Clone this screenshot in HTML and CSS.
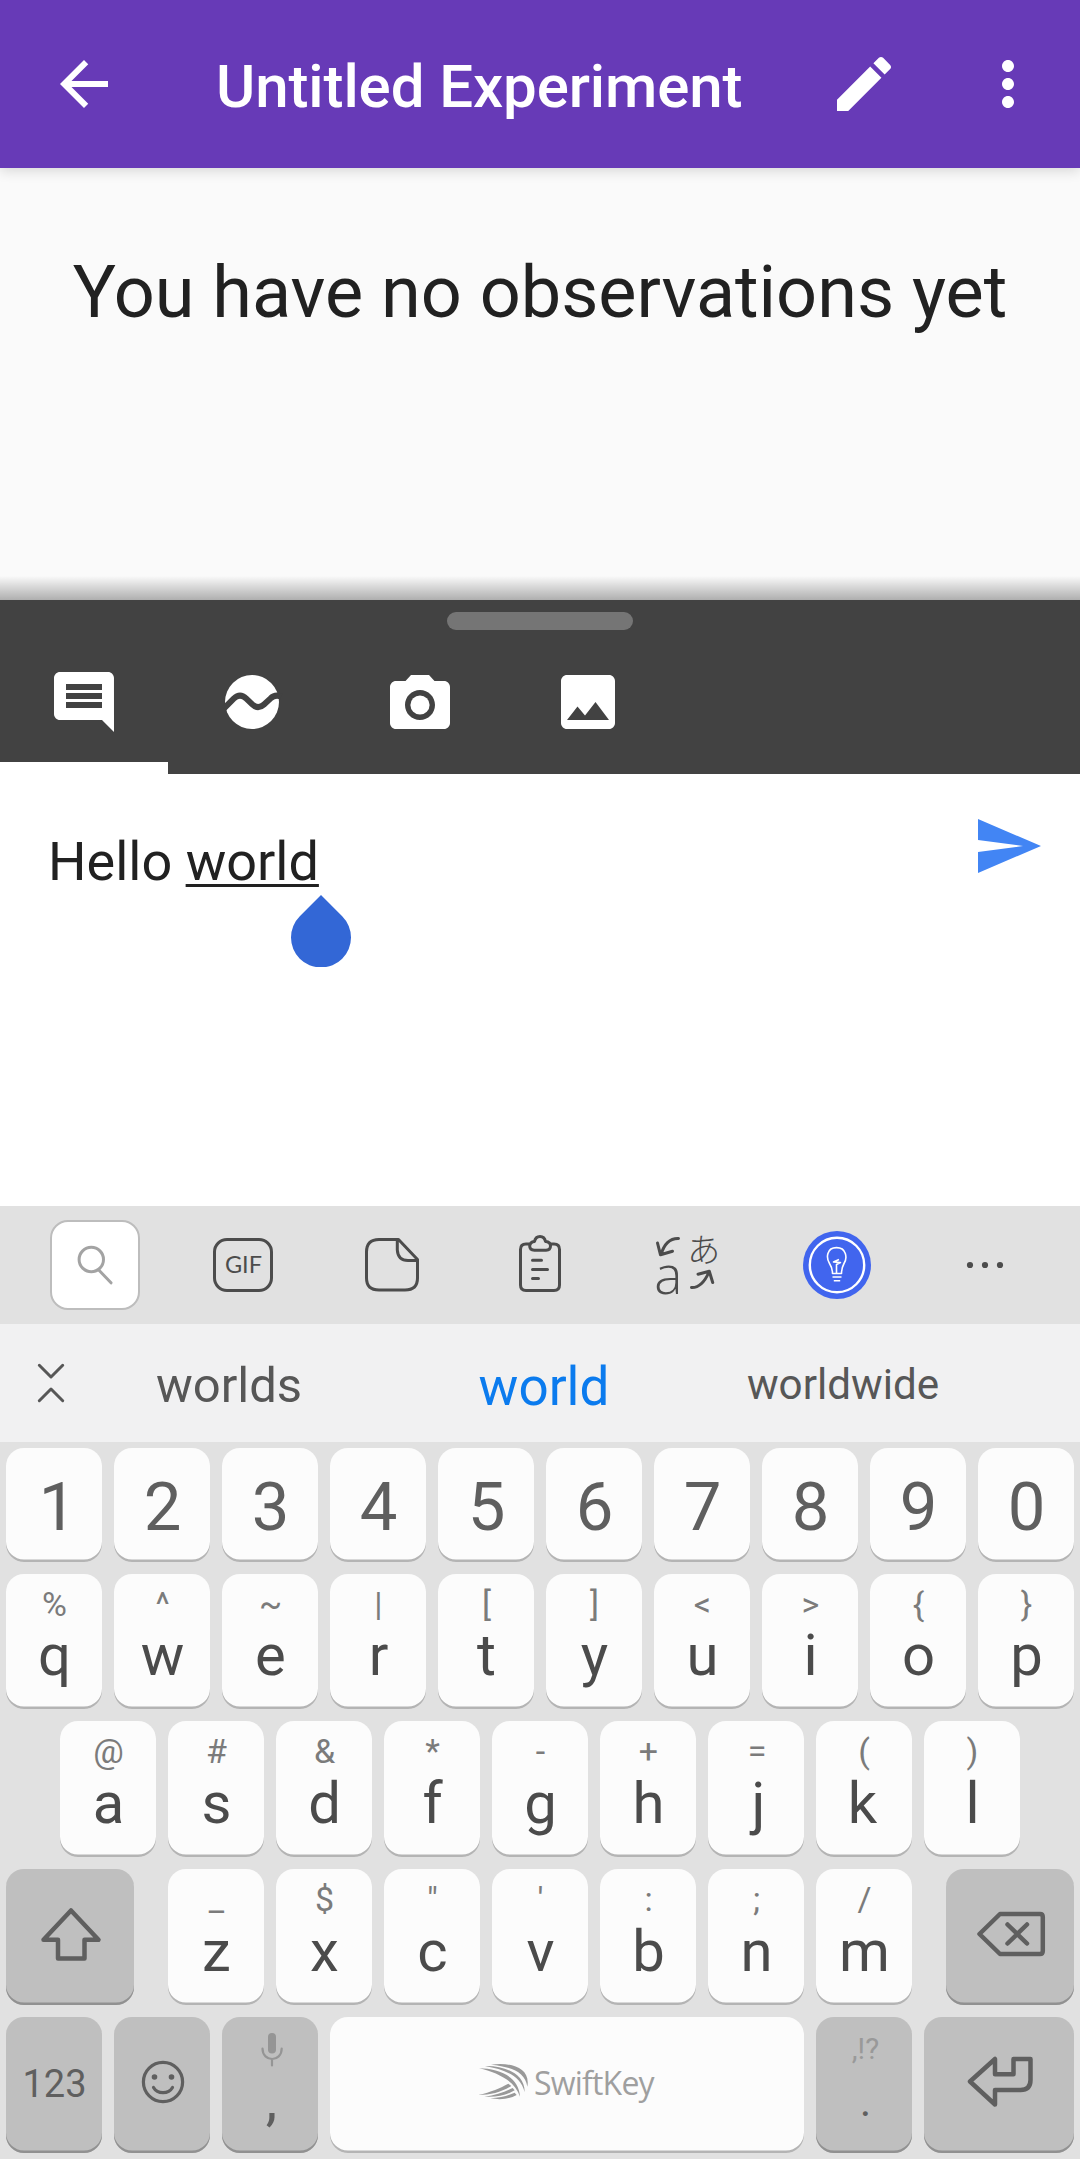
FILE: index.html
```html
<!DOCTYPE html>
<html lang="en">
<head>
<meta charset="utf-8">
<title>Untitled Experiment</title>
<link rel="stylesheet" href="styles.css">
</head>
<body>
<header class="appbar">
  <svg class="icon" viewBox="0 0 24 24"><path d="M20 11H7.83l5.59-5.59L12 4l-8 8 8 8 1.41-1.41L7.83 13H20v-2z"/></svg>
  <h1 class="appbar-title">Untitled Experiment</h1>
  <svg class="icon" viewBox="0 0 24 24"><path d="M3 17.25V21h3.75L17.81 9.94l-3.75-3.75L3 17.25zM20.71 7.04c.39-.39.39-1.02 0-1.41l-2.34-2.34c-.39-.39-1.02-.39-1.41 0l-1.83 1.83 3.75 3.75 1.83-1.83z"/></svg>
  <svg class="icon" viewBox="0 0 24 24"><path d="M12 8c1.1 0 2-.9 2-2s-.9-2-2-2-2 .9-2 2 .9 2 2 2zm0 2c-1.1 0-2 .9-2 2s.9 2 2 2 2-.9 2-2-.9-2-2-2zm0 6c-1.1 0-2 .9-2 2s.9 2 2 2 2-.9 2-2-.9-2-2-2z"/></svg>
</header>

<main class="observations">
  <p class="empty">You have no observations yet</p>
</main>

<section class="sheet">
  <div class="grip"></div>
  <nav class="tabs">
    <div class="tab active"><svg class="icon" viewBox="0 0 24 24"><path d="M21.99 4c0-1.1-.89-2-1.99-2H4c-1.1 0-2 .9-2 2v12c0 1.1.9 2 2 2h14l4 4-.01-18zM18 14H6v-2h12v2zm0-3H6V9h12v2zm0-3H6V6h12v2z"/></svg></div>
    <div class="tab"><svg class="icon" viewBox="0 0 24 24"><circle cx="12" cy="12" r="9"/><path class="wave" d="M2.6 14.2L5.9 10.9Q8 8.9 10.1 10.9L12.1 12.8Q14 14.6 16 12.8L18.2 10.8Q19.7 9.3 21.8 10.2"/></svg></div>
    <div class="tab"><svg class="icon" viewBox="0 -1 24 24"><path fill-rule="evenodd" d="M9 2L7.17 4H4c-1.1 0-2 .9-2 2v12c0 1.1.9 2 2 2h16c1.1 0 2-.9 2-2V6c0-1.1-.9-2-2-2h-3.17L15 2H9zm3 15c-2.76 0-5-2.24-5-5s2.24-5 5-5 5 2.24 5 5-2.24 5-5 5z"/><circle cx="12" cy="12" r="3.2"/></svg></div>
    <div class="tab"><svg class="icon" viewBox="0 0 24 24"><path d="M21 19V5c0-1.1-.9-2-2-2H5c-1.1 0-2 .9-2 2v14c0 1.1.9 2 2 2h14c1.1 0 2-.9 2-2zM8.5 13.5l2.5 3.01L14.5 12l4.5 6H5l3.5-4.5z"/></svg></div>
  </nav>
</section>

<section class="note">
  <p class="note-text">Hello <span class="composing">world<svg class="caret-handle" viewBox="0 0 60 72"><path d="M30 0L51.2 21.2A30 30 0 1 1 8.8 21.2Z"/></svg></span></p>
  <svg class="icon send" viewBox="0 0 24 24"><path d="M2 21L23 12 2 3v7l15 2-15 2z"/></svg>
</section>

<section class="toolbar">
  <div class="tool"><div class="search"><svg width="86" height="86" viewBox="52 1222 86 86" class="line pale"><circle cx="91.3" cy="1259.5" r="12.2"/><path d="M99 1270.3L111 1282.8"/></svg></div></div>
  <div class="tool"><div class="gif">GIF</div></div>
  <div class="tool"><svg width="60" height="60" viewBox="362 1235 60 60" class="line"><path d="M398.5 1239.5H379Q366.500 1239.500 366.500 1252V1278Q366.500 1290 379 1290H405Q417.500 1290 417.500 1278V1259.500ZM397.300 1240V1250Q398 1260.500 408 1260.500H417"/></svg></div>
  <div class="tool"><svg width="60" height="68" viewBox="510 1231 60 68" class="line"><path d="M529 1244H526Q520.500 1244 520.500 1249.500V1285Q520.500 1290.500 526 1290.500H554Q559.500 1290.500 559.500 1285V1249.500Q559.500 1244 554 1244H551M534.500 1250.300Q529.700 1250 529.700 1246Q530 1242 534.500 1241.500Q535.500 1236.500 540 1236.500T545.500 1241.500Q550.500 1242 550.500 1246Q550.500 1250 546 1250.300ZM532.500 1260.300H541.500M532.500 1269.400H547.500M532.500 1278.500H538.500"/></svg></div>
  <div class="tool translate">
    <svg width="26" height="22" viewBox="656 1236 26 22" class="line"><path d="M679.500 1239.500Q667 1239 662 1255.500M658.500 1244L661.500 1255.800 673.500 1252.200"/></svg>
    <span class="kana" lang="ja">あ</span>
    <span class="latin">a</span>
    <svg width="26" height="22" viewBox="690 1271 26 22" class="line"><path d="M692.500 1290.500Q703 1291 710 1275M699 1277.200L710.300 1274.200 713.700 1285.500"/></svg>
  </div>
  <div class="tool"><svg width="68" height="68" viewBox="803 1231 68 68" class="bulb"><circle class="disc" cx="837" cy="1265" r="34"/><circle class="ring" cx="837" cy="1265" r="27.200"/><path d="M832.500 1273.500Q832.500 1268 829.500 1263.500C826 1258 826.500 1247.600 836.500 1247.600S847.500 1258 844 1263.500Q841.500 1268 841.500 1273.500ZM836.500 1273V1264.500L840.500 1262.500 833.500 1262 839 1259.500M832.500 1277H841.500M833.800 1280.700H840.200"/></svg></div>
  <div class="tool"><svg width="40" height="10" viewBox="0 0 40 10" class="dots"><circle cx="5" cy="5" r="3.100"/><circle cx="20" cy="5" r="3.100"/><circle cx="35" cy="5" r="3.100"/></svg></div>
</section>

<section class="suggestions">
  <svg width="30" height="42" viewBox="36 1362 30 42" class="line collapse"><path d="M39.300 1365.300L51 1377 62.700 1365.300M39.300 1400.700L51 1389 62.700 1400.700"/></svg>
  <span class="word first">worlds</span>
  <span class="word best">world</span>
  <span class="word last">worldwide</span>
</section>

<section class="keyboard">
  <div class="row digits">
    <div class="key one">1</div><div class="key">2</div><div class="key">3</div><div class="key">4</div><div class="key">5</div><div class="key">6</div><div class="key">7</div><div class="key">8</div><div class="key">9</div><div class="key">0</div>
  </div>
  <div class="row top">
    <div class="key"><small>%</small>q</div><div class="key"><small>^</small>w</div><div class="key"><small>~</small>e</div><div class="key"><small>|</small>r</div><div class="key"><small>[</small>t</div><div class="key"><small>]</small>y</div><div class="key"><small>&lt;</small>u</div><div class="key"><small>&gt;</small>i</div><div class="key"><small>{</small>o</div><div class="key"><small>}</small>p</div>
  </div>
  <div class="row home">
    <div class="key"><small>@</small>a</div><div class="key"><small>#</small>s</div><div class="key"><small>&amp;</small>d</div><div class="key"><small>*</small>f</div><div class="key"><small>-</small>g</div><div class="key"><small>+</small>h</div><div class="key jay"><small>=</small>j</div><div class="key kay"><small>(</small>k</div><div class="key"><small>)</small>l</div>
  </div>
  <div class="row bottom">
    <div class="key dark shift"><svg width="128" height="134" viewBox="6 1869 128 134" class="glyph"><path d="M71 1910.500L98.500 1939.800H84.500V1958.500H58V1939.800H43.500Z"/></svg></div>
    <div class="key"><small>_</small>z</div><div class="key"><small>$</small>x</div><div class="key"><small>"</small>c</div><div class="key"><small>'</small>v</div><div class="key"><small>:</small>b</div><div class="key"><small>;</small>n</div><div class="key"><small>/</small>m</div>
    <div class="key dark delete"><svg width="128" height="134" viewBox="946 1869 128 134" class="glyph"><path d="M979.500 1934L1000 1914H1040Q1042.800 1914 1042.800 1917V1951Q1042.800 1954 1040 1954H1000ZM1007.500 1924.500L1027 1943.500M1027 1924.500L1007.500 1943.500"/></svg></div>
  </div>
  <div class="row space">
    <div class="key dark mode">123</div>
    <div class="key dark"><svg width="96" height="134" viewBox="114 2017 96 134" class="glyph smile"><circle cx="163" cy="2082" r="19.600"/><path d="M153.500 2087.500Q156.500 2092.700 163 2092.700T172.500 2087.500"/><circle class="eye" cx="154.500" cy="2077" r="2.800"/><circle class="eye" cx="171.500" cy="2077" r="2.800"/></svg></div>
    <div class="key dark comma"><small><svg width="24" height="36" viewBox="259 2031 24 36" class="mic"><rect x="267" y="2033" width="8" height="20.500" rx="4"/><path d="M261.500 2048.500C261.500 2062.500 280.700 2062.500 280.700 2048.500M271 2059V2065.500"/></svg></small>,</div>
    <div class="key spacebar">
      <svg width="52" height="38" viewBox="27 41 156 114" class="swift"><path d="M66 46C120 38 186 52 175 112C168 66 125 52 66 46ZM48 50C105 48 168 72 167 128C154 76 105 61 48 50ZM30 57C88 58 150 80 153 142C138 94 85 70 30 57ZM28 137C66 128 94 116 118 103L127 110C98 128 66 137 28 137ZM46 142C80 138 106 128 131 116L137 123C110 140 80 144 46 142ZM64 147C95 145 115 139 137 130L143 137Q112 155 64 147Z"/></svg>
      <span class="brand">SwiftKey</span>
    </div>
    <div class="key dark period"><small>,!?</small>.</div>
    <div class="key dark enter"><svg width="150" height="134" viewBox="924 2017 150 134" class="glyph"><path d="M970 2081.500L995 2059V2074.300H1013.500V2059H1030.500V2080Q1030.500 2090 1020.500 2090H995V2104.500Z"/></svg></div>
  </div>
</section>
</body>
</html>
```
FILE: styles.css
```css
* { box-sizing: border-box; }
body {
  margin: 0;
  width: 1080px;
  height: 2159px;
  overflow: hidden;
  display: flex;
  flex-direction: column;
  font-family: Roboto, "Liberation Sans", sans-serif;
  background: #fff;
}
svg { display: block; flex: none; }
p, h1 { margin: 0; font-weight: 400; white-space: nowrap; }
.icon { width: 72px; height: 72px; fill: #fff; }

/* App bar */
.appbar {
  height: 168px;
  padding: 0 36px 0 48px;
  display: flex;
  align-items: center;
  background: #673ab7;
  box-shadow: 0 3px 12px rgba(0, 0, 0, .14);
  z-index: 1;
}
.appbar-title {
  margin: 5px 0 0 96px;
  width: 612px;
  font-size: 60px;
  font-weight: 500;
  line-height: 72px;
  letter-spacing: -.1px;
  color: #fff;
}
.appbar .icon + .icon { margin-left: 72px; }

.observations {
  height: 432px;
  padding-top: 81px;
  text-align: center;
  background: linear-gradient(rgba(0,0,0,0) 408px, rgba(0,0,0,.3)) #fafafa;
}
.empty { font-size: 72px; line-height: 88px; color: #212121; }

/* Bottom sheet */
.sheet { height: 174px; padding-top: 12px; background: #424242; }
.grip { width: 186px; height: 18px; margin: 0 auto; border-radius: 9px; background: #757575; }
.tabs { display: flex; height: 144px; }
.tab { width: 168px; display: flex; justify-content: center; padding-top: 36px; }
.tab.active { border-bottom: 12px solid #fff; }
.wave { fill: none; stroke: #424242; stroke-width: 2; }

.note { height: 432px; display: flex; justify-content: space-between; padding: 36px 36px 0 48px; background: #fff; }
.note-text { padding-top: 20px; font-size: 54px; line-height: 64px; color: #212121; }
.composing {
  position: relative;
  text-decoration: underline;
  text-decoration-thickness: 3px;
  text-underline-offset: 4px;
  text-decoration-skip-ink: none;
}
.caret-handle { position: absolute; right: -32px; top: 65px; width: 60px; height: 72px; fill: #3367d6; }
.send { fill: #4285f4; }

/* Keyboard toolbar */
.toolbar { height: 118px; padding: 0 21px; display: flex; align-items: center; background: #e1e1e1; }
.tool { flex: 0 0 calc(100% / 7); display: flex; justify-content: center; align-items: center; }
.line { fill: none; stroke: #4c4c4c; stroke-width: 3; stroke-linecap: round; stroke-linejoin: round; }
.pale { stroke: #a3a3a3; }
.search { width: 90px; height: 90px; border: 2px solid #bdbdbd; border-radius: 18px; background: #fff; }
.gif {
  width: 60px;
  height: 54px;
  border: 3px solid #4c4c4c;
  border-radius: 14px;
  font: 23.500px/47px Lato, sans-serif;
  color: #4c4c4c;
  text-align: center;
}
.translate { display: grid; grid-template-columns: 25px 33px; grid-template-rows: 31px 33px; column-gap: 10px; align-items: start; }
.translate svg:last-child { margin-top: 4px; justify-self: start; }
.translate svg:first-child { margin: 2px 0 0 1px; }
.kana { font: 300 33px/30px "Noto Sans CJK JP", sans-serif; color: #4c4c4c; margin-left: -2px; }
.latin { font: 300 53px/20px "Open Sans", sans-serif; color: #4c4c4c; }
.disc { fill: #4165ee; }
.ring { fill: none; stroke: #fff; stroke-width: 2.400; }
.bulb path { fill: none; stroke: #fff; stroke-width: 1.600; stroke-linejoin: round; }
.dots { fill: #4c4c4c; }

/* Word suggestions */
.suggestions {
  height: 118px;
  display: grid;
  grid-template-columns: 72px 314px 316px 282px;
  align-items: center;
  text-align: center;
  color: #575757;
  background: #f1f1f2;
}
.collapse { margin-left: 36px; stroke: #575757; }
.first { font-size: 49px; padding-top: 4px; }
.best { font-size: 53px; padding-top: 8px; color: #0b7bee; }
.last { font-size: 42.200px; padding-top: 3px; }

/* Keys */
.keyboard { flex: 1; padding: 6px 6px 0; display: flex; flex-direction: column; gap: 12px; background: #e1e1e1; }
.row { display: flex; gap: 12px; height: 136px; }
.digits { height: 114px; }
.top { height: 135px; }
.home { padding: 0 54px; }
.key {
  flex: 0 0 96px;
  padding: 10px 0 0 1px;
  border-radius: 18px;
  background: #fcfcfc;
  box-shadow: inset 0 -2.500px 0 #b4b4b4;
  font-size: 58px;
  line-height: 60px;
  text-align: center;
  color: #4b4b4b;
}
.key small { display: block; height: 40px; margin-bottom: 2px; font-size: 34px; line-height: 40px; color: #7b7b7b; }
.top .key small { margin-bottom: 1px; }
.digits .key { padding: 0 0 0 1px; font-size: 67px; line-height: 118px; color: #5f5f5f; }
/* Narrow glyphs are centred on their ink rather than their advance */
.digits .one { padding-left: 7px; }
.key.jay { padding-left: 5px; }
.jay small { margin-left: -3px; }
.key.kay { padding: 10px 3px 0 0; }
.kay small { margin-right: -3px; }
.key.dark { background: #bfbfbf; box-shadow: inset 0 -2.500px 0 #919191; color: #5f5f5f; }
.key > svg.glyph { margin: -10px 0 0 -1px; }
.glyph { fill: none; stroke: #5f5f5f; stroke-width: 4.500; stroke-linejoin: round; stroke-linecap: round; }
.smile { stroke-width: 3.200; }
.eye { fill: #5f5f5f; stroke: none; }
.shift, .delete { flex: 0 0 128px; }
.shift { margin-right: 22px; }
.delete { margin-left: 22px; }
.key.mode { padding: 0 0 0 1px; font-size: 38px; line-height: 134px; }
.key.comma { padding-left: 3px; }
.mic { margin: 0 auto; position: relative; top: 4px; fill: #959595; }
.mic path { fill: none; stroke: #959595; stroke-width: 2.200; stroke-linecap: round; }
.key.spacebar { flex: 0 0 474px; display: flex; padding: 0 0 0 148px; align-items: center; }
.swift { fill: #999; margin-bottom: 6px; }
.brand { font: 32px/40px "Open Sans", sans-serif; color: #9f9f9f; margin: 0 0 4px 4px; letter-spacing: -.8px; }
.key.period { font-size: 44px; padding: 12px 0 0 3px; }
.key.period small { font-size: 29.500px; color: #999; }
.enter { flex: 0 0 150px; }
```
